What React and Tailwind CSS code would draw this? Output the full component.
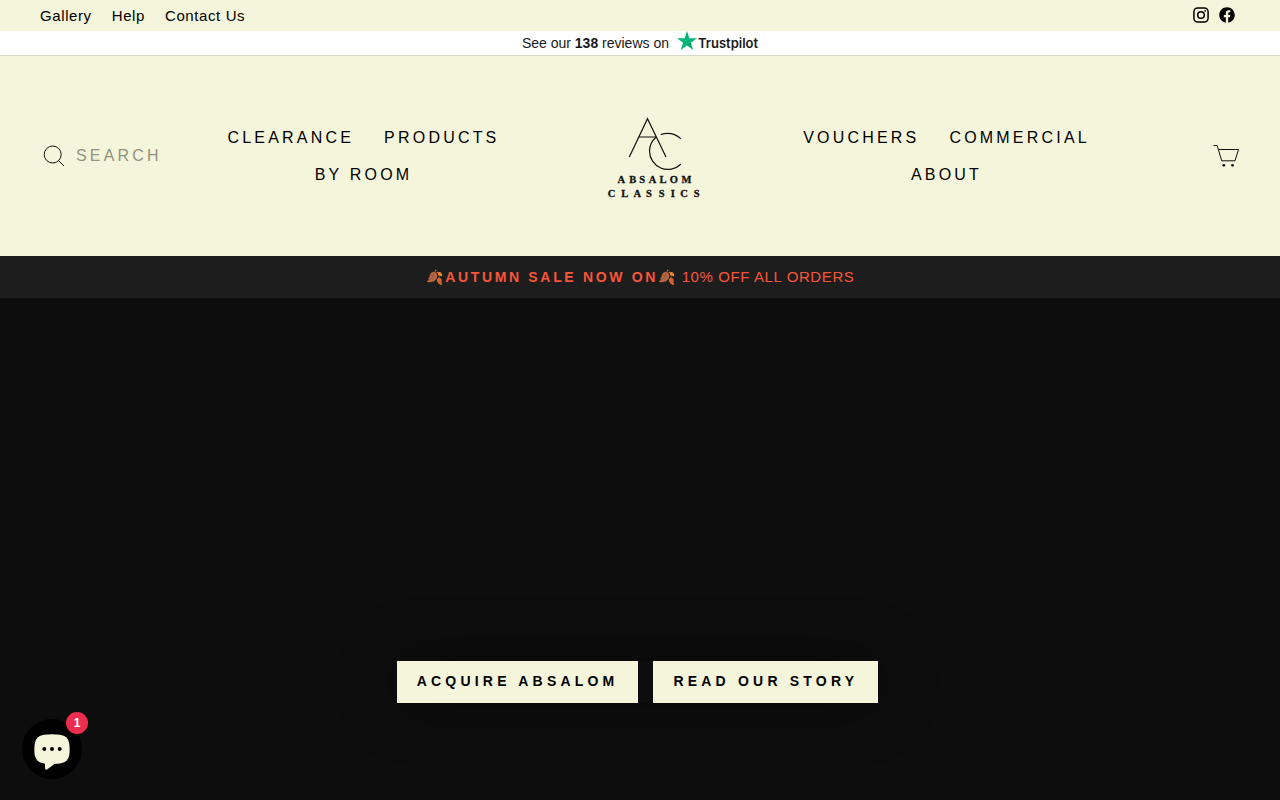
import React from "react";
import { FaFacebook } from "react-icons/fa";

const leftLinks = ["Clearance", "Products", "By Room"];
const rightLinks = ["Vouchers", "Commercial", "About"];

function TopBar() {
  return (
    <div className="flex h-[31px] items-center justify-between bg-[#f5f5dc] pr-[45px] pl-10">
      <nav aria-label="Secondary" className="flex gap-5 text-[15px] leading-[22px] tracking-[0.04em]">
        <a href="#gallery">Gallery</a>
        <a href="#help">Help</a>
        <a href="#contact">Contact Us</a>
      </nav>
      <div className="flex gap-[10px] pb-[2px]">
        <a href="#instagram" aria-label="Instagram">
          <svg viewBox="0 0 16 16" className="size-4" fill="none" stroke="#000" strokeWidth="1.5">
            <rect x="0.9" y="0.9" width="14.2" height="14.2" rx="3.8" />
            <circle cx="8" cy="8" r="3.3" />
            <circle cx="12.2" cy="3.8" r="0.9" fill="#000" stroke="none" />
          </svg>
        </a>
        <a href="#facebook" aria-label="Facebook">
          <FaFacebook className="size-4" />
        </a>
      </div>
    </div>
  );
}

function Reviews() {
  return (
    <a
      href="#reviews"
      className="flex h-[25px] items-center justify-center border-b border-[#d8d8cc] bg-white text-[14px] text-[#191919]"
    >
      <span>
        See our <strong>138</strong> reviews on
      </span>
      <svg viewBox="0 0 20 19" className="mb-[6px] ml-2 h-[19px] w-5">
        <path d="M10 0l2.4 7.2H20l-6.1 4.5L16.2 19 10 14.5 3.8 19l2.3-7.3L0 7.2h7.6z" fill="#00b67a" />
        <path d="M14.4 13.2l-.5-1.5L10 14.5z" fill="#00804f" />
      </svg>
      <span className="ml-px font-['Inter',sans-serif] text-[13px] leading-[22px] font-semibold">Trustpilot</span>
    </a>
  );
}

function NavGroup({ label, links }) {
  return (
    <nav
      aria-label={label}
      className="flex flex-wrap justify-center gap-x-[30px] text-[16px] leading-[37px] tracking-[0.2em] uppercase"
    >
      {links.map((link) => (
        <a key={link} href="#shop">
          {link}
        </a>
      ))}
    </nav>
  );
}

function Logo() {
  return (
    <a href="#home" aria-label="Absalom Classics" className="justify-self-center">
      <svg viewBox="0 0 96 84" className="h-[84px] w-24" fill="none" stroke="#111" strokeWidth="1.2">
        <path d="M22.3 43L40.5 4.7L59 43M32.3 23H49.5" />
        <path d="M53.7 20.5A20.5 20.5 0 0 1 73.8 24.6M49 23.2A18.5 18.5 0 0 0 42.5 37A18.5 18.5 0 0 0 73.8 50.3" />
        <g
          fill="#111"
          stroke="#111"
          strokeWidth="0.3"
          fontFamily="Liberation Serif, serif"
          fontWeight="700"
          fontSize="10.5"
        >
          <text y="68.5" x="10.5 22.2 32.2 41.8 52.4 62.7 74.5">ABSALOM</text>
          <text y="82.5" x="0.8 14.3 26.5 39 51.8 63.8 73.2 86.8">CLASSICS</text>
        </g>
      </svg>
    </a>
  );
}

function Header() {
  return (
    <header className="grid h-[200px] grid-cols-[158px_1fr_252px_1fr_128px] items-center bg-[#f5f5dc] px-10">
      <form role="search" className="flex items-center gap-2">
        <button type="submit" aria-label="Search" className="size-7 shrink-0">
          <svg viewBox="0 0 28 28" className="size-7" fill="none" stroke="#111" strokeWidth="1">
            <circle cx="12.7" cy="12.5" r="8.5" />
            <path d="M18.5 18.5L24 24" />
          </svg>
        </button>
        <input
          type="search"
          aria-label="Search the store"
          placeholder="SEARCH"
          className="w-full min-w-0 bg-transparent text-[16px] tracking-[0.2em] outline-none placeholder:text-[#92927f]"
        />
      </form>
      <NavGroup label="Shop" links={leftLinks} />
      <Logo />
      <NavGroup label="Company" links={rightLinks} />
      <a href="#cart" aria-label="Cart" className="justify-self-end">
        <svg viewBox="0 0 28 28" className="size-7" fill="none" stroke="#111" strokeWidth="1">
          <path d="M1.5 3.5H5.2L9.7 18.8H23L26.5 7.5H6.5" />
          <circle cx="11.8" cy="23.3" r="1.4" fill="#111" stroke="none" />
          <circle cx="20.5" cy="23.3" r="1.4" fill="#111" stroke="none" />
        </svg>
      </a>
    </header>
  );
}

function Announcement() {
  return (
    <p className="flex h-[42px] items-center justify-center bg-[#1d1d1d] text-[15px] text-[#f9553a]">
      <strong className="text-[14px] tracking-[0.19em] whitespace-nowrap">🍂AUTUMN SALE NOW ON🍂</strong>
      <span className="ml-1 tracking-[0.04em] whitespace-nowrap">10% OFF ALL ORDERS</span>
    </p>
  );
}

function HeroButton({ href, children }) {
  return (
    <a
      href={href}
      className="flex h-[42px] items-center bg-[#f5f5dc] px-5 pb-[2px] text-[14px] font-bold tracking-[0.3em] text-black uppercase"
    >
      {children}
    </a>
  );
}

function Hero() {
  return (
    <main className="flex grow items-end justify-center bg-[#0d0d0d] pr-[5px] pb-[97px]">
      <div className="flex gap-[15px] shadow-[0_0_60px_0_rgba(0,0,0,0.4)]">
        <HeroButton href="#acquire">Acquire Absalom</HeroButton>
        <HeroButton href="#story">Read Our Story</HeroButton>
      </div>
    </main>
  );
}

function Chat() {
  return (
    <button
      type="button"
      aria-label="Open chat, 1 unread message"
      className="fixed bottom-[21px] left-[22px] flex size-[60px] items-center justify-center rounded-full bg-black pt-[6px]"
    >
      <svg viewBox="0 0 36 36" className="size-9">
        <path
          d="M10 .8Q18-.4 26 .8Q34.5 1.8 35.3 10Q36 15.5 35.3 21Q34.2 28.5 26 29.5L20.5 29.9L13 35.6Q11 36.3 11 33.8V29.7Q1.8 28.8.7 21Q0 15.5.7 10Q1.7 1.8 10 .8Z"
          fill="#f5f5dc"
        />
        <g fill="#000">
          <circle cx="10.3" cy="15" r="2" />
          <circle cx="18" cy="15" r="2" />
          <circle cx="25.7" cy="15" r="2" />
        </g>
      </svg>
      <span className="absolute -top-[7px] -right-[6px] flex size-[22px] items-center justify-center rounded-full bg-[#ec2d50] text-[12px] font-bold text-white">
        1
      </span>
    </button>
  );
}

export default function App() {
  return (
    <div className="flex min-h-screen flex-col font-['Liberation_Sans',Arial,sans-serif] text-black">
      <TopBar />
      <Reviews />
      <Header />
      <Announcement />
      <Hero />
      <Chat />
    </div>
  );
}
